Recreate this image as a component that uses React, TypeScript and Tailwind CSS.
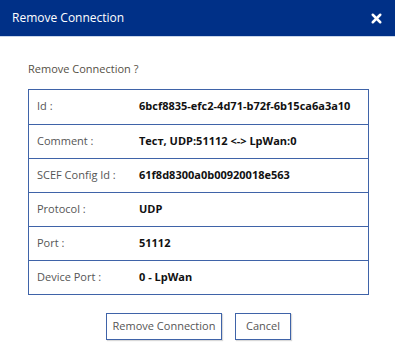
import { X } from "lucide-react";

const ROWS: [string, string][] = [
  ["Id :", "6bcf8835-efc2-4d71-b72f-6b15ca6a3a10"],
  ["Comment :", "Тест, UDP:51112 <-> LpWan:0"],
  ["SCEF Config Id :", "61f8d8300a0b00920018e563"],
  ["Protocol :", "UDP"],
  ["Port :", "51112"],
  ["Device Port :", "0 - LpWan"],
];

export default function App() {
  return (
    <div className="h-[347px] w-[395px] overflow-hidden bg-white font-['Open_Sans','Noto_Sans',sans-serif] text-[11px]">
      <div className="flex h-[37px] items-center justify-between border-b border-[#c9d6ea] bg-[#003087] pl-3 pr-[11px]">
        <h1 className="text-[12px] text-white">Remove Connection</h1>
        <X className="h-[15px] w-[15px] text-white" strokeWidth={4} />
      </div>

      <div className="px-7 pt-[24px]">
        <p className="text-[#555045]">Remove Connection ?</p>

        <div className="mt-[11px] w-[341px] border border-[#3f63a8]">
          {ROWS.map(([label, value], i) => (
            <div
              key={label}
              className={`flex h-[34px] items-center ${i > 0 ? "border-t border-[#3f63a8]" : ""}`}
            >
              <span className="w-[110px] shrink-0 pl-[8px] text-[#555]">{label}</span>
              <span className="font-bold text-[#111]">{value}</span>
            </div>
          ))}
        </div>

        <div className="mt-[18px] flex gap-[13px] pl-[78px]">
          <button
            type="button"
            className="h-[27px] w-[116px] border border-[#3f63a8] text-[#555] shadow-[1px_1px_1px_rgba(0,0,0,0.15)]"
          >
            Remove Connection
          </button>
          <button
            type="button"
            className="h-[27px] w-[56px] border border-[#3f63a8] text-[#555] shadow-[1px_1px_1px_rgba(0,0,0,0.15)]"
          >
            Cancel
          </button>
        </div>
      </div>
    </div>
  );
}
